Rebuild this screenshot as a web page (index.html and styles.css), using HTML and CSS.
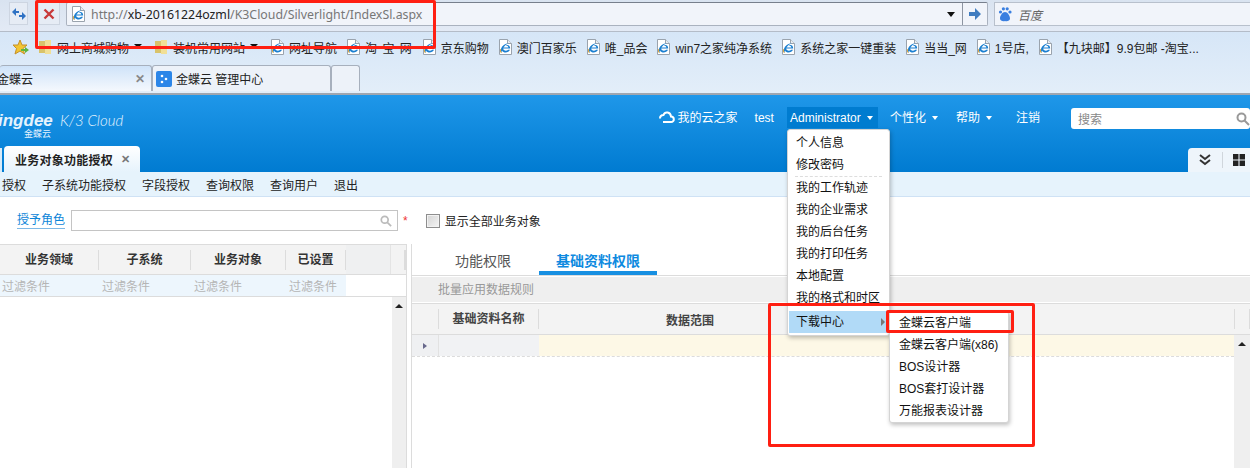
FILE: index.html
```html
<!DOCTYPE html>
<html lang="zh-CN">

<head>
    <meta charset="UTF-8">
    <title>业务对象功能授权</title>
    <link rel="stylesheet" href="styles.css">
</head>

<body>
    <svg class="defs" width="0" height="0">
        <symbol id="ie" viewBox="0 0 14 16">
            <path d="M1.5 .5H9.5L13.5 4.5V15.5H1.5Z" fill="#fff" stroke="#9aa3ad" />
            <path d="M9.5 .5V4.5H13.5" fill="#e8edf2" stroke="#9aa3ad" />
            <path d="M2.8 10.2C4 6.6 7 4.6 10.6 4.2C8 5.4 6.4 7 5.4 8.6H10.4C10.2 7.2 9 6.4 7.8 6.6C9.8 5.4 12.2 6.4 12.2 9.6H5.2C5.2 11.8 8.4 12.6 10.2 10.8H12C10.4 14.2 5.4 14.2 4 11.4C3.6 12.2 3.4 13 3.4 13.8C2.4 13 2.2 11.6 2.8 10.2Z" fill="#1b7fd0" />
            <path d="M2.8 10.2C2.2 11.6 2.4 13 3.4 13.8" fill="none" stroke="#e9a21d" />
        </symbol>
        <symbol id="folder" viewBox="0 0 14 16">
            <path d="M1 2H7V14H1Z" fill="#d9c36a" />
            <path d="M7 1H13V15H7Z" fill="#f1df96" />
        </symbol>
    </svg>

    <div class="nav-row">
        <button class="nav-btn back-btn">
            <svg width="16" height="14" viewBox="0 0 16 14">
                <path d="M5 1L1 5L5 9V6H8V4H5Z" fill="#2f72c4" />
                <path d="M11 13L15 9L11 5V8H8V10H11Z" fill="#2f72c4" />
            </svg>
        </button>
        <button class="nav-btn stop-btn">
            <svg width="12" height="12" viewBox="0 0 12 12">
                <path d="M1.5 1.5L10.5 10.5M10.5 1.5L1.5 10.5" stroke="#c8393a" stroke-width="2.4" />
            </svg>
        </button>
        <div class="address">
            <svg class="ie-icon" width="14" height="16"><use href="#ie" /></svg>
            <span class="url">http://<b>xb-20161224ozml</b>/K3Cloud/Silverlight/IndexSl.aspx</span>
            <span class="addr-drop"></span>
            <span class="addr-go">
                <svg width="12" height="12" viewBox="0 0 12 12">
                    <path d="M6 0L12 6L6 12V8H0V4H6Z" fill="#3f7cc0" />
                </svg>
            </span>
        </div>
        <div class="search-engine">
            <svg width="14" height="16" viewBox="0 0 14 16">
                <g fill="#3a7fe0">
                    <circle cx="2.5" cy="6" r="1.6" />
                    <circle cx="5.4" cy="2.8" r="1.6" />
                    <circle cx="9.2" cy="2.8" r="1.6" />
                    <circle cx="12" cy="6" r="1.6" />
                    <path d="M7 6C4.5 6 2 9.5 2 12.5C2 15 5 15.5 7 15C9 15.5 12 15 12 12.5C12 9.5 9.5 6 7 6Z" />
                </g>
            </svg>
            <i>百度</i>
        </div>
    </div>

    <div class="fav-area">
        <div class="fav-row">
            <svg class="star" width="18" height="17" viewBox="0 0 18 17">
                <path d="M8 1L10 6H15L11 9.5L12.5 15L8 12L3 15L4.5 9.5L1 6H6Z" fill="#f3c531" stroke="#c4902a" />
                <path d="M9 10H13V8L17 11L13 14V12H9Z" fill="#5fb53c" />
            </svg>
            <span class="fav"><svg width="14" height="16"><use href="#folder" /></svg>网上商城购物<em class="fav-caret"></em></span>
            <span class="fav"><svg width="14" height="16"><use href="#folder" /></svg>装机常用网站<em class="fav-caret"></em></span>
            <span class="fav"><svg width="14" height="16"><use href="#ie" /></svg>网址导航</span>
            <span class="fav fav-wide"><svg width="14" height="16"><use href="#ie" /></svg>淘&nbsp;宝&nbsp;网</span>
            <span class="fav"><svg width="14" height="16"><use href="#ie" /></svg>京东购物</span>
            <span class="fav"><svg width="14" height="16"><use href="#ie" /></svg>澳门百家乐</span>
            <span class="fav"><svg width="14" height="16"><use href="#ie" /></svg>唯_品会</span>
            <span class="fav"><svg width="14" height="16"><use href="#ie" /></svg>win7之家纯净系统</span>
            <span class="fav"><svg width="14" height="16"><use href="#ie" /></svg>系统之家一键重装</span>
            <span class="fav"><svg width="14" height="16"><use href="#ie" /></svg>当当_网</span>
            <span class="fav"><svg width="14" height="16"><use href="#ie" /></svg>1号店,</span>
            <span class="fav"><svg width="14" height="16"><use href="#ie" /></svg>【九块邮】9.9包邮 -淘宝...</span>
        </div>
        <div class="tab-row">
            <div class="btab btab-active"><span class="btab-text">金蝶云</span><span class="btab-close">✕</span></div>
            <div class="btab btab-second">
                <svg width="16" height="16" viewBox="0 0 16 16">
                    <rect width="16" height="16" rx="2" fill="#2c86e8" />
                    <circle cx="6" cy="5" r="1.3" fill="#fff" />
                    <circle cx="10" cy="8" r="1.3" fill="#fff" />
                    <circle cx="6" cy="11" r="1.3" fill="#fff" />
                </svg>
                <span>金蝶云 管理中心</span>
            </div>
            <div class="btab btab-new"></div>
        </div>
    </div>

    <header class="app-header">
        <div class="header-top">
            <div class="logo">
                <span class="logo-name">ingdee</span>
                <span class="logo-sub">金蝶云</span>
                <span class="logo-prod">K/3 Cloud</span>
            </div>
            <nav class="top-nav">
                <svg class="cloud" width="16" height="14" viewBox="0 0 16 14">
                    <path d="M4 12H12C16 12 15.5 6.5 12 6.5C11.5 2 6 1 4.5 5C2.5 5 1 6.5 1 8.5" fill="none" stroke="#fff" stroke-width="2" />
                </svg>
                <a class="nav-home">我的云之家</a>
                <a class="nav-test">test</a>
                <a class="nav-admin">Administrator<em class="caret"></em></a>
                <a class="nav-personal">个性化<em class="caret"></em></a>
                <a class="nav-help">帮助<em class="caret"></em></a>
                <a class="nav-logout">注销</a>
                <div class="top-search">
                    <span>搜索</span>
                    <svg width="14" height="14" viewBox="0 0 14 14">
                        <circle cx="5.5" cy="5.5" r="4" fill="none" stroke="#999" stroke-width="2" />
                        <path d="M8.5 8.5L13 13" stroke="#999" stroke-width="2" />
                    </svg>
                </div>
            </nav>
        </div>
        <div class="header-tabs">
            <div class="prev-tab"></div>
            <div class="page-tab"><span>业务对象功能授权</span><em>✕</em></div>
            <div class="tab-tools">
                <svg width="12" height="12" viewBox="0 0 12 12">
                    <path d="M1 1L6 5L11 1M1 6L6 10L11 6" fill="none" stroke="#333" stroke-width="2" />
                </svg>
                <span class="tool-sep"></span>
                <svg width="12" height="12" viewBox="0 0 11 11">
                    <path d="M0 0H5V5H0ZM6 0H11V5H6ZM0 6H5V11H0ZM6 6H11V11H6Z" fill="#222" />
                </svg>
            </div>
        </div>
    </header>

    <div class="toolbar">
        <a>授权</a>
        <a>子系统功能授权</a>
        <a>字段授权</a>
        <a>查询权限</a>
        <a>查询用户</a>
        <a>退出</a>
    </div>

    <div class="filter-row">
        <a class="role-label">授予角色</a>
        <div class="role-input">
            <svg width="12" height="12" viewBox="0 0 14 14">
                <circle cx="5.5" cy="5.5" r="4" fill="none" stroke="#bbb" stroke-width="2" />
                <path d="M8.5 8.5L13 13" stroke="#bbb" stroke-width="2" />
            </svg>
        </div>
        <span class="required">*</span>
        <span class="checkbox"></span>
        <span class="check-label">显示全部业务对象</span>
    </div>

    <main class="panels">
        <section class="left-panel">
            <div class="left-head">
                <span class="lc lc-1">业务领域</span>
                <span class="lc lc-2">子系统</span>
                <span class="lc lc-3">业务对象</span>
                <span class="lc lc-4">已设置</span>
                <span class="lc-blank"></span>
                <span class="lc-end"></span>
            </div>
            <div class="left-filter">
                <div class="left-filter-cells">
                    <span class="lf-1">过滤条件</span>
                    <span class="lf-2">过滤条件</span>
                    <span class="lf-3">过滤条件</span>
                    <span class="lf-4">过滤条件</span>
                </div>
            </div>
            <div class="left-body">
                <div class="scrollbar left-scroll"><em class="arrow-up"></em></div>
            </div>
        </section>

        <section class="right-panel">
            <div class="right-tabs">
                <span class="rtab">功能权限</span>
                <span class="rtab rtab-active">基础资料权限</span>
            </div>
            <div class="batch-bar">批量应用数据规则</div>
            <div class="grid-head">
                <span class="gh-corner"></span>
                <span class="gh-name">基础资料名称</span>
                <span class="gh-range">数据范围</span>
                <span class="gh-end"></span>
            </div>
            <div class="grid-body">
                <div class="grid-rows">
                    <div class="grid-row">
                        <span class="row-mark"><em></em></span>
                        <span class="row-name"></span>
                        <span class="row-range"></span>
                    </div>
                </div>
                <div class="scrollbar right-scroll"><em class="arrow-up"></em></div>
            </div>
        </section>
    </main>

    <!-- 下拉菜单 -->
    <ul class="menu user-menu">
        <li>个人信息</li>
        <li class="split">修改密码</li>
        <li>我的工作轨迹</li>
        <li>我的企业需求</li>
        <li>我的后台任务</li>
        <li>我的打印任务</li>
        <li>本地配置</li>
        <li>我的格式和时区</li>
        <li class="on">下载中心<em></em></li>
    </ul>
    <ul class="menu sub-menu">
        <li>金蝶云客户端</li>
        <li>金蝶云客户端(x86)</li>
        <li>BOS设计器</li>
        <li>BOS套打设计器</li>
        <li>万能报表设计器</li>
    </ul>

    <!-- 红框标注 -->
    <div class="mark mark-url"></div>
    <div class="mark mark-area"></div>
    <div class="mark mark-item"></div>
</body>

</html>
```

FILE: styles.css
```css
* {
    margin: 0;
    padding: 0;
    list-style: none;
    box-sizing: border-box;
}

html,
body {
    width: 1250px;
    height: 468px;
    overflow: hidden;
}

body {
    position: relative;
    background: #fff;
    color: #222;
    font: 12px "Liberation Sans", "Noto Sans CJK SC", sans-serif;
}

em,
i {
    font-style: normal;
}

.defs {
    display: block;
    height: 0;
}

/* 浏览器地址栏 */
.nav-row {
    display: flex;
    align-items: flex-start;
    height: 32px;
    padding: 2px 0 0 9px;
    background: linear-gradient(#d9e3f0, #e3eaf5);
    border-bottom: 1px solid #b4bcc8;
}

.nav-btn {
    display: flex;
    align-items: center;
    justify-content: center;
    width: 19px;
    height: 23px;
    border: 1px solid #cdd5e1;
    background: #e6ecf5;
}

.stop-btn {
    width: 22px;
    margin-left: 10px;
}

.address {
    display: flex;
    align-items: center;
    width: 922px;
    height: 24px;
    margin-left: 6px;
    background: #f1f4fa;
    border: 1px solid #aab2bf;
    border-top-color: #777f8c;
    border-radius: 2px;
}

.ie-icon {
    margin-left: 4px;
}

.url {
    flex: 1;
    margin-left: 6px;
    font: 12.35px "Noto Sans", sans-serif;
    color: #777;
}

.url b {
    font-weight: 400;
    color: #222;
}

.addr-drop {
    width: 0;
    height: 0;
    margin-right: 7px;
    border: 4px solid transparent;
    border-top: 5px solid #111;
    border-bottom: 0;
}

.addr-go {
    display: flex;
    align-items: center;
    justify-content: center;
    width: 25px;
    height: 22px;
    border-left: 1px solid #8d95a2;
}

.search-engine {
    display: flex;
    flex: 1;
    align-items: center;
    gap: 6px;
    height: 24px;
    margin-left: 6px;
    padding-left: 3px;
    background: #f1f4fa;
    border: 1px solid #b8c0cc;
    border-right: 0;
    color: #666;
}

.search-engine i {
    font-style: italic;
}

/* 收藏夹 */
.fav-area {
    height: 63px;
    background: linear-gradient(#d6e6f7, #e3eef9);
    border-bottom: 2px solid #9fa6b0;
}

.fav-row {
    display: flex;
    align-items: center;
    gap: 9px;
    height: 32px;
    padding: 0 0 2px 12px;
    font-size: 12px;
    white-space: nowrap;
}

.star {
    margin-right: -1px;
}

.fav {
    display: flex;
    align-items: center;
    gap: 5px;
}

.fav-wide {
    letter-spacing: 1px;
}

.fav-caret {
    width: 0;
    height: 0;
    margin: -3px 3px 0 0;
    border: 4.5px solid transparent;
    border-top: 4px solid #111;
    border-bottom: 0;
}

.tab-row {
    display: flex;
    height: 26px;
    margin-top: 1px;
}

.btab {
    display: flex;
    align-items: center;
    height: 26px;
    border: 1px solid #a7b0bd;
    border-bottom: 0;
    border-radius: 3px 3px 0 0;
    background: #edf2f9;
}

.btab-active {
    width: 152px;
    border-left: 0;
    background: linear-gradient(#cfe3f9, #f4f8fd);
    font-size: 12px;
}

.btab-text {
    flex: 1;
    margin-left: -3px;
}

.btab-close {
    margin-right: 6px;
    color: #888;
    font-weight: 700;
}

.btab-second {
    gap: 4px;
    width: 179px;
    padding-left: 3px;
}

.btab-new {
    width: 29px;
}

/* 应用头部 */
.app-header {
    display: flex;
    flex-direction: column;
    height: 77px;
    background: linear-gradient(#1f97e9, #007bd1);
}

.header-top {
    display: flex;
    height: 51px;
}

.logo {
    position: relative;
    width: 140px;
    color: #e6f3fd;
}

.logo-name {
    position: absolute;
    top: 16px;
    left: -2px;
    font: italic 700 17px "Liberation Sans", sans-serif;
}

.logo-sub {
    position: absolute;
    top: 34px;
    left: 24px;
    font-size: 9px;
    line-height: 10px;
}

.logo-prod {
    position: absolute;
    top: 16px;
    left: 60px;
    font: italic 300 15px "Lato", sans-serif;
    white-space: nowrap;
}

.top-nav {
    display: flex;
    flex: 1;
    align-items: flex-start;
    padding: 12px 0 0 519px;
    color: #fff;
    white-space: nowrap;
}

.top-nav a {
    height: 21px;
    line-height: 22px;
}

.cloud {
    margin: 3px 3px 0 0;
}

.nav-test {
    margin-left: 17px;
}

.nav-admin {
    width: 91px;
    margin-left: 13px;
    padding-left: 3px;
    background: #007cd0;
}

.nav-personal {
    margin-left: 12px;
}

.nav-help {
    margin-left: 18px;
}

.nav-logout {
    margin-left: 24px;
}

.caret {
    display: inline-block;
    width: 0;
    height: 0;
    margin-left: 6px;
    vertical-align: 2px;
    border: 3.5px solid transparent;
    border-top: 4px solid #fff;
    border-bottom: 0;
}

.top-search {
    display: flex;
    align-items: center;
    justify-content: space-between;
    width: 179px;
    height: 21px;
    margin: 1px 0 0 31px;
    padding: 0 0 0 7px;
    background: #fff;
    border-radius: 3px;
    color: #888;
}

.header-tabs {
    display: flex;
    align-items: flex-end;
    height: 26px;
}

.prev-tab {
    width: 2px;
    height: 24px;
    background: #d9ebf8;
}

.page-tab {
    display: flex;
    align-items: center;
    width: 136px;
    height: 26px;
    margin-left: 2px;
    padding-left: 11px;
    background: linear-gradient(#fff, #e6f3fc);
    border-radius: 4px 4px 0 0;
    font-weight: 700;
    letter-spacing: .25px;
}

.page-tab em {
    margin-left: 8px;
    color: #777;
    font-size: 11px;
}

.tab-tools {
    display: flex;
    align-items: center;
    gap: 10px;
    width: 62px;
    height: 24px;
    margin-left: auto;
    padding-left: 11px;
    background: #eef5fb;
    border-radius: 4px 0 0 0;
}

.tool-sep {
    width: 1px;
    height: 16px;
    margin-left: 1px;
    background: #d0d6dc;
}

/* 工具条 */
.toolbar {
    display: flex;
    align-items: center;
    gap: 16px;
    height: 25px;
    padding-left: 2px;
    background: #e6f3fc;
    border-bottom: 1px solid #cfe2f5;
}

.filter-row {
    display: flex;
    align-items: center;
    height: 47px;
    padding: 0 0 0 17px;
}

.role-label {
    color: #0d85d8;
    border-bottom: 1px solid #7db8e6;
    line-height: 15px;
}

.role-input {
    display: flex;
    align-items: center;
    justify-content: flex-end;
    width: 327px;
    height: 21px;
    margin-left: 6px;
    padding-right: 5px;
    border: 1px solid #c4c4c4;
}

.required {
    margin-left: 5px;
    color: #e33;
}

.checkbox {
    width: 14px;
    height: 14px;
    margin-left: 18px;
    border: 1px solid #8e8e8e;
    background: linear-gradient(135deg, #d4d4d4, #f4f4f4);
    box-shadow: inset 0 0 0 1px #f2f2f2;
}

.check-label {
    margin-left: 5px;
}

/* 左右面板 */
.panels {
    display: flex;
    gap: 4px;
    height: 224px;
}

.left-panel {
    display: flex;
    flex-direction: column;
    width: 407px;
}

.left-head {
    display: flex;
    align-items: center;
    height: 31px;
    background: #f3f3f3;
    border-top: 1px solid #dcdcdc;
    border-right: 1px solid #dcdcdc;
    border-bottom: 1px solid #dcdcdc;
    color: #333;
    font-weight: 700;
}

.lc {
    height: 20px;
    line-height: 20px;
    text-align: center;
    border-right: 1px solid #dcdcdc;
}

.lc-1 {
    width: 99px;
}

.lc-2 {
    width: 92px;
}

.lc-3 {
    width: 95px;
}

.lc-4 {
    width: 60px;
}

.lc-blank {
    align-self: stretch;
    width: 45px;
    background: #eff0f1;
    border-right: 1px solid #e4e4e4;
}

.lc-end {
    width: 15px;
    height: 20px;
    border-right: 2px solid #dcdcdc;
}

.left-filter {
    height: 22px;
    border-right: 1px solid #dcdcdc;
    border-bottom: 1px solid #dcdcdc;
}

.left-filter-cells {
    display: flex;
    align-items: center;
    width: 346px;
    height: 21px;
    background: #edf6fd;
    color: #b5b5b5;
}

.lf-1 {
    width: 102px;
    padding-left: 2px;
}

.lf-2 {
    width: 92px;
}

.lf-3 {
    width: 95px;
}

.left-body {
    display: flex;
    flex: 1;
    justify-content: flex-end;
    border-right: 1px solid #dcdcdc;
}

.scrollbar {
    display: flex;
    justify-content: center;
    width: 15px;
    padding-top: 7px;
    background: #efefef;
}

.left-scroll {
    width: 14px;
}

.arrow-up {
    width: 0;
    height: 0;
    border: 4px solid transparent;
    border-top: 0;
    border-bottom: 4px solid #222;
}

.right-panel {
    display: flex;
    flex: 1;
    flex-direction: column;
    border-left: 1px solid #dcdcdc;
}

.right-tabs {
    display: flex;
    height: 32px;
    margin-left: -1px;
    border-bottom: 1px solid #dcdcdc;
    font-size: 14px;
    color: #555;
}

.rtab {
    height: 31px;
    margin-left: 44px;
    padding-top: 6px;
}

.rtab-active {
    width: 118px;
    margin-left: 28px;
    border-bottom: 4px solid #1890e2;
    color: #0e8ae0;
    font-weight: 700;
    text-align: center;
}

.batch-bar {
    height: 25px;
    margin-top: 1px;
    padding-left: 26px;
    line-height: 26px;
    background: #efefef;
    color: #999;
}

.grid-head {
    display: flex;
    align-items: center;
    height: 32px;
    margin-top: 1px;
    background: #f3f3f3;
    border-top: 1px solid #dcdcdc;
    border-bottom: 1px solid #dcdcdc;
    color: #444;
    font-weight: 700;
}

.gh-corner {
    width: 27px;
    height: 20px;
    border-right: 1px solid #dcdcdc;
}

.gh-name {
    width: 100px;
    height: 20px;
    line-height: 20px;
    text-align: center;
    border-right: 1px solid #dcdcdc;
}

.gh-range {
    width: 695px;
    padding-right: 393px;
    text-align: center;
}

.gh-end {
    width: 16px;
    height: 20px;
    border-left: 1px solid #dcdcdc;
    border-right: 1px solid #dcdcdc;
}

.grid-body {
    display: flex;
    flex: 1;
}

.grid-rows {
    flex: 1;
}

.grid-row {
    display: flex;
    height: 22px;
    border-bottom: 1px dashed #dcdcdc;
}

.row-mark {
    display: flex;
    align-items: center;
    justify-content: center;
    width: 27px;
    background: #eff0f2;
    border-right: 1px solid #e2e2e2;
}

.row-mark em {
    width: 0;
    height: 0;
    border: 3.5px solid transparent;
    border-left: 4px solid #68688c;
    border-right: 0;
}

.row-name {
    width: 100px;
    background: #f1f2f4;
}

.row-range {
    flex: 1;
    background: #fdf8e6;
}

.right-scroll {
    width: 16px;
}

/* 下拉菜单 */
.menu {
    position: absolute;
    background: #fff;
    border: 1px solid #d4d4d4;
    border-radius: 3px;
    box-shadow: 1px 2px 4px rgba(0, 0, 0, .25);
    white-space: nowrap;
}

.menu li {
    height: 22px;
    padding-left: 8px;
    line-height: 22px;
    color: #111;
}

.user-menu {
    top: 129px;
    left: 787px;
    width: 103px;
    padding: 2px 0;
}

.user-menu .split {
    position: relative;
    height: 23px;
}

.user-menu .split::after {
    content: "";
    position: absolute;
    right: 7px;
    bottom: 0;
    left: 7px;
    border-bottom: 1px dashed #ddd;
}

.user-menu .on {
    position: relative;
    margin: 2px 1px 0;
    padding-left: 7px;
    background: #b1daf7;
}

.user-menu .on em {
    position: absolute;
    top: 7px;
    right: 3px;
    width: 0;
    height: 0;
    border: 4px solid transparent;
    border-left: 4px solid #777;
    border-right: 0;
}

.sub-menu {
    top: 311px;
    left: 889px;
    width: 120px;
}

.sub-menu li {
    padding-left: 9px;
}

/* 红框标注 */
.mark {
    position: absolute;
    border: 3px solid #ff1f12;
    border-radius: 2px;
}

.mark-url {
    top: 0;
    left: 35px;
    width: 401px;
    height: 49px;
}

.mark-area {
    top: 303px;
    left: 768px;
    width: 267px;
    height: 144px;
}

.mark-item {
    top: 310px;
    left: 886px;
    width: 128px;
    height: 23px;
}
```
